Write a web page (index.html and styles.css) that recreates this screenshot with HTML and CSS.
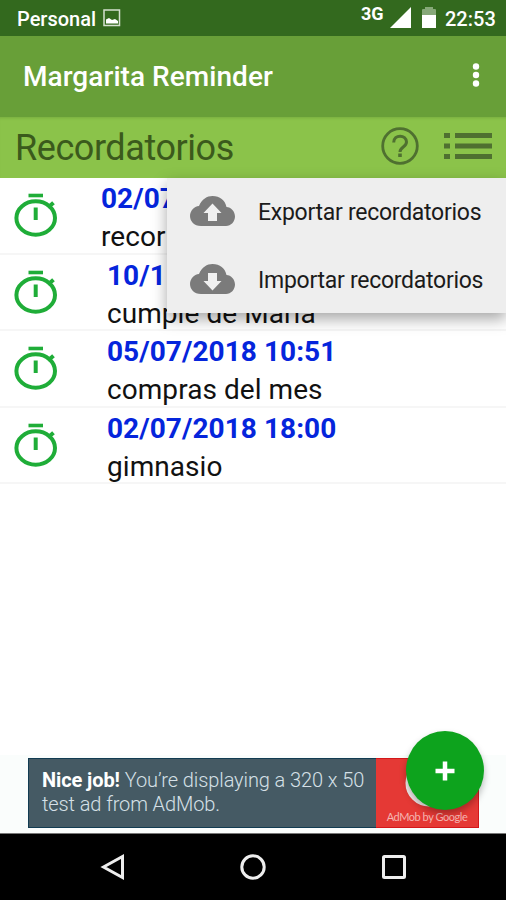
FILE: index.html
```html
<!DOCTYPE html>
<html lang="es">
<head>
  <meta charset="utf-8">
  <title>Margarita Reminder</title>
  <link rel="stylesheet" href="styles.css">
</head>
<body>
<svg width="0" height="0" class="defs">
  <symbol id="timer" viewBox="0 0 44 46">
    <path d="M14.500 3.500h14.500" fill="none" stroke="#1fad38" stroke-width="3.600"/>
    <ellipse cx="21.700" cy="26" rx="19.300" ry="16.700" fill="none" stroke="#1fad38" stroke-width="4"/>
    <path d="M21.700 15.500v12.500" stroke="#1fad38" stroke-width="4"/>
    <path d="M34 15.500l5.500-4.800" stroke="#1fad38" stroke-width="4"/>
  </symbol>
</svg>

<div class="screen">
  <div class="status">
    <span class="carrier">Personal</span>
    <svg class="pic" width="18" height="18" viewBox="0 0 18 18">
      <rect x="1" y="1" width="15.500" height="15.500" fill="none" stroke="#d5e1cf" stroke-width="1.500"/>
      <path d="M3 14.500v-4l3-1.500 3 2 3-1 3 2v2.500z" fill="#fff"/>
    </svg>
    <span class="net">3G</span>
    <svg class="signal" width="21" height="21" viewBox="0 0 21 21"><path d="M0 21L21 0v21z" fill="#fff"/></svg>
    <svg class="battery" width="14" height="21" viewBox="0 0 14 21">
      <path d="M0 8V3q0-1 1-1h2V0h8v2h2q1 0 1 1v5z" fill="#86a878"/>
      <path d="M0 8h14v13H0z" fill="#fff"/>
    </svg>
    <span class="clock">22:53</span>
  </div>

  <div class="appbar">
    <h1 class="title">Margarita Reminder</h1>
    <svg class="dots" width="8" height="26" viewBox="0 0 8 26" fill="#fff">
      <circle cx="4" cy="4.500" r="3.200"/><circle cx="4" cy="13" r="3.200"/><circle cx="4" cy="21.500" r="3.200"/>
    </svg>
  </div>

  <div class="subbar">
    <h2 class="section">Recordatorios</h2>
    <svg class="help" width="38" height="38" viewBox="0 0 38 38" fill="none" stroke="#4f7030">
      <circle cx="19" cy="19" r="17.300" stroke-width="2.800"/>
      <path d="M12.700 15.500c0-8.500 12.800-8.300 12.800-.5 0 5-6.500 5-6.500 10" stroke-width="3"/>
      <path d="M19 26.500v3.500" stroke-width="3.600"/>
    </svg>
    <svg class="list-icon" width="48" height="28" viewBox="0 0 48 28" fill="none" stroke="#4f7030" stroke-width="5">
      <path d="M0 3.500h6M11 3.500h37M0 14h6M11 14h37M0 24.500h6M11 24.500h37"/>
    </svg>
  </div>

  <div class="content">
    <div class="item first">
      <svg class="timer"><use href="#timer"/></svg>
      <div class="info"><div class="date">02/07</div><div class="text">recor</div></div>
    </div>
    <div class="item">
      <svg class="timer"><use href="#timer"/></svg>
      <div class="info"><div class="date">10/11</div><div class="text">cumple de María</div></div>
    </div>
    <div class="item">
      <svg class="timer"><use href="#timer"/></svg>
      <div class="info"><div class="date">05/07/2018 10:51</div><div class="text">compras del mes</div></div>
    </div>
    <div class="item">
      <svg class="timer"><use href="#timer"/></svg>
      <div class="info"><div class="date">02/07/2018 18:00</div><div class="text">gimnasio</div></div>
    </div>

    <div class="menu">
      <div class="option">
        <svg width="45" height="31" viewBox="0 0 45 31">
          <path d="M11 30C4 30 0 25 0 20c0-5 4-9.500 9-10C12 3 17 0 22.500 0 30 0 35 4 36.500 11 41 11 45 15.500 45 20.500S41 30 36 30z" fill="#7b7b7b"/>
          <path d="M22.500 7.500L13.500 17H18v8h9v-8h4.500z" fill="#f0f0f0"/>
        </svg>
        <span>Exportar recordatorios</span>
      </div>
      <div class="option">
        <svg width="45" height="31" viewBox="0 0 45 31">
          <path d="M11 30C4 30 0 25 0 20c0-5 4-9.500 9-10C12 3 17 0 22.500 0 30 0 35 4 36.500 11 41 11 45 15.500 45 20.500S41 30 36 30z" fill="#7b7b7b"/>
          <path d="M18 9h9v8h4.500l-9 9.500-9-9.500H18z" fill="#f0f0f0"/>
        </svg>
        <span>Importar recordatorios</span>
      </div>
    </div>
  </div>

  <div class="banner">
    <div class="ad">
      <div class="ad-text"><div><b>Nice job!</b> You’re displaying a 320 x 50</div><div>test ad from AdMob.</div></div>
      <div class="ad-logo">
        <svg class="ring" width="48" height="48" viewBox="0 0 48 48"><circle cx="24" cy="24" r="20" fill="none" stroke="#f4eeee" stroke-width="7"/></svg>
        <span class="by">AdMob by Google</span>
      </div>
    </div>
    <button class="fab">
      <svg width="20" height="20" viewBox="0 0 20 20"><path d="M10 .5v19M.5 10h19" stroke="#fff" stroke-width="4.500"/></svg>
    </button>
  </div>

  <div class="navbar">
    <svg width="28" height="28" viewBox="0 0 28 28"><path d="M4.500 14L23.500 3.500v21z"/></svg>
    <svg width="28" height="28" viewBox="0 0 28 28"><circle cx="14" cy="14" r="11.200"/></svg>
    <svg width="28" height="28" viewBox="0 0 28 28"><rect x="3.500" y="3.500" width="21" height="21" rx="1"/></svg>
  </div>
</div>
</body>
</html>
```
FILE: styles.css
```css
* {
  box-sizing: border-box;
}
body {
  margin: 0;
  font-family: Roboto, "Liberation Sans", sans-serif;
  background: #fff;
}
svg {
  display: block;
  flex: none;
}
.defs {
  position: absolute;
}
.screen {
  width: 506px;
  height: 900px;
  display: flex;
  flex-direction: column;
  overflow: hidden;
  white-space: nowrap;
}
.status {
  height: 36px;
  flex: none;
  background: #33691e;
  color: #fff;
  display: flex;
  align-items: flex-start;
  padding: 0 11px 0 17px;
  font-size: 20px;
  font-weight: 500;
}
.carrier {
  line-height: 38px;
  width: 79px;
}
.pic {
  margin: 9px 0 0 7px;
}
.net {
  margin-left: auto;
  font-size: 18px;
  font-weight: 700;
  line-height: 27px;
  width: 24px;
}
.signal {
  margin: 7px 0 0 5px;
}
.battery {
  margin: 7px 9px 0 11px;
}
.clock {
  line-height: 38px;
  width: 50px;
}
.appbar {
  height: 81px;
  flex: none;
  background: #689f38;
  display: flex;
  align-items: center;
  justify-content: space-between;
  padding: 0 26px 0 23px;
}
.title {
  margin: 0;
  color: #fff;
  font-size: 28px;
  font-weight: 500;
  letter-spacing: .05px;
}
.dots {
  margin-bottom: 4px;
}
.subbar {
  height: 61px;
  flex: none;
  background: #8bc34a;
  box-shadow: inset 0 3px 3px -2px #78ad40;
  display: flex;
  align-items: center;
  padding: 0 14px 3px 15px;
}
.section {
  margin: 3px 0 0;
  color: #3b5a1c;
  font-size: 36px;
  font-weight: 400;
  letter-spacing: -.43px;
}
.help {
  margin-left: auto;
  margin-right: 25px;
}
.content {
  flex: 1;
  position: relative;
}
.item {
  height: 76.600px;
  border-bottom: 2px solid #f6f6f6;
  display: flex;
  padding-left: 14px;
}
.timer {
  width: 44px;
  height: 46px;
  margin-top: 14px;
}
.info {
  margin-left: 49px;
}
.first .info {
  margin-left: 43px;
}
.date {
  color: #0525dc;
  font-size: 28px;
  font-weight: 700;
  line-height: 38px;
  margin-top: 2px;
  letter-spacing: .06px;
}
.text {
  color: #111;
  font-size: 28px;
  line-height: 37px;
  letter-spacing: .06px;
}
.menu {
  position: absolute;
  top: 0;
  right: 0;
  width: 339px;
  height: 135px;
  background: #eee;
  box-shadow: 0 6px 14px rgba(0,0,0,.35);
}
.option {
  height: 67.500px;
  display: flex;
  align-items: center;
  padding-left: 23px;
  gap: 23px;
  color: #1b1b1b;
  font-size: 23px;
  letter-spacing: -.27px;
}
.option span {
  padding-top: 2px;
}
.banner {
  height: 78px;
  flex: none;
  position: relative;
  background: #fafdfc;
  padding: 3px 27px 5px 28px;
}
.ad {
  height: 70px;
  display: flex;
  border: 1px solid #123c52;
  border-right: 0;
  background: #455a64;
}
.ad-text {
  flex: 1;
  min-width: 0;
  padding: 9px 0 0 13px;
  color: #d5e0e7;
  font-size: 20px;
  font-weight: 300;
  line-height: 24px;
  letter-spacing: -.1px;
}
.ad-text b {
  color: #fff;
  font-weight: 700;
}
.ad-logo {
  width: 103px;
  flex: none;
  margin: -1px 0;
  background: #e53935;
  border: 1px solid #d3171a;
  border-left: 0;
  position: relative;
  text-align: center;
}
.ring {
  position: absolute;
  left: 29px;
  top: 0;
}
.by {
  display: block;
  margin-top: 50px;
  color: #f4b5b1;
  font: 11px/16px Lato, sans-serif;
  letter-spacing: -.45px;
}
.fab {
  position: absolute;
  left: 406px;
  top: -24px;
  width: 78px;
  height: 79px;
  padding: 0;
  border: 0;
  border-radius: 50%;
  background: #0da31d;
  box-shadow: 0 4px 7px rgba(0,0,0,.28);
  display: flex;
  align-items: center;
  justify-content: center;
}
.navbar {
  height: 67px;
  flex: none;
  background: #000;
  border-top: 1px solid #777;
  display: flex;
  justify-content: center;
  align-items: center;
  gap: 112.500px;
}
.navbar svg {
  fill: none;
  stroke: #eee;
  stroke-width: 3;
}
```
